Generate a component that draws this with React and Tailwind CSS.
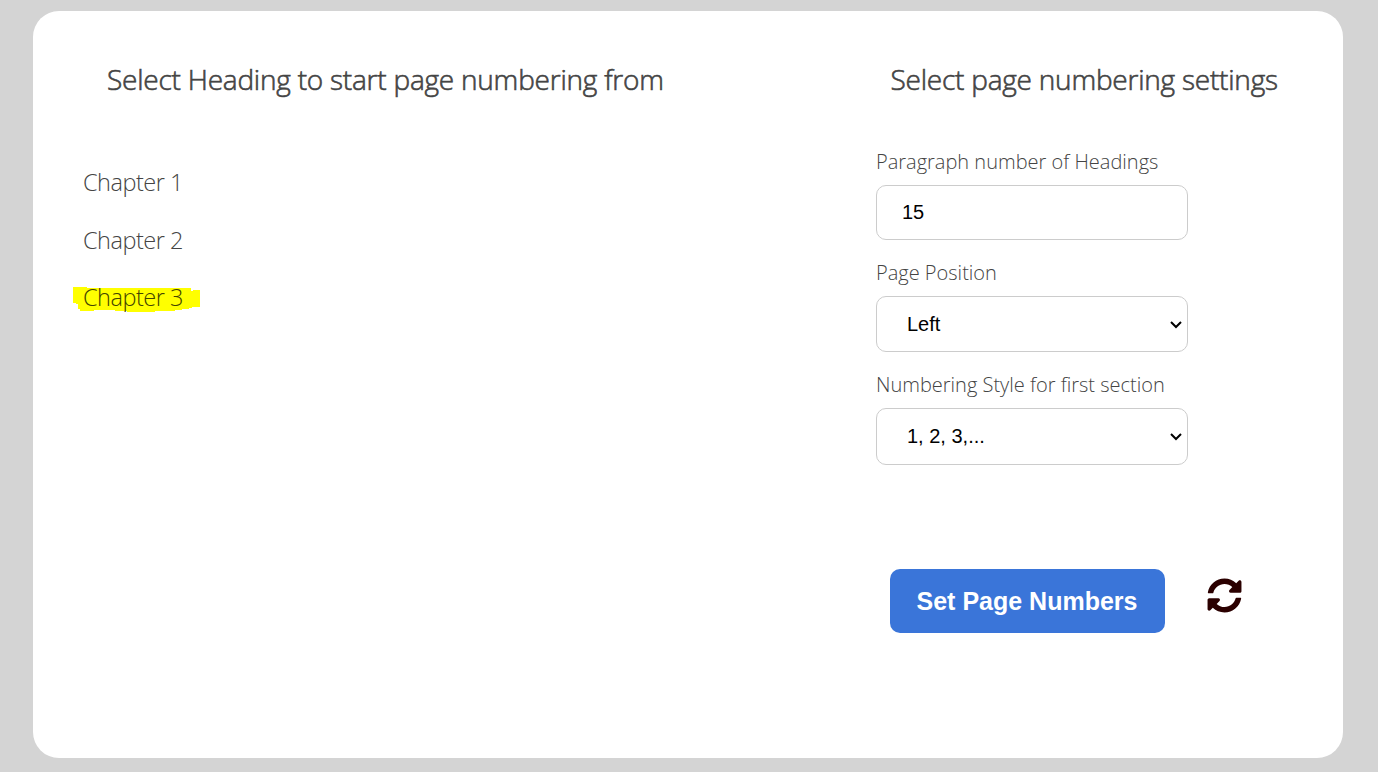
import { FaSyncAlt } from "react-icons/fa";

const chapters = ["Chapter 1", "Chapter 2", "Chapter 3"];

function Heading({ className, children }) {
  return (
    <h2 className={`text-[28px] leading-[40px] font-light tracking-[-0.225px] whitespace-nowrap text-[#444] [-webkit-text-stroke:0.6px_#444] ${className}`}>
      {children}
    </h2>
  );
}

function Field({ label, className, children }) {
  return (
    <label className={`block ${className}`}>
      <span className="block h-[37px] text-[20px] leading-[27px] font-light whitespace-nowrap text-[#444]">{label}</span>
      {children}
    </label>
  );
}

function Select({ value, className }) {
  return (
    <div className={`relative w-[312px] ${className}`}>
      <select defaultValue={value} className="h-full w-full appearance-none rounded-[10px] border border-[#ccc] bg-white pb-px pl-[30px] font-['Liberation_Sans',Arial,sans-serif] text-[20px] font-normal text-black">
        <option>{value}</option>
      </select>
      <svg viewBox="0 0 12 8" className="pointer-events-none absolute top-[25px] right-[6px] h-2 w-3" fill="none" stroke="#000" strokeWidth="2">
        <path d="M1 1L6 6L11 1" />
      </svg>
    </div>
  );
}

export default function App() {
  return (
    <div className="h-[772px] w-[1378px] bg-[#d4d4d4] pt-[11px] pl-[33px] font-['Open_Sans',sans-serif]">
      <main className="flex h-[747px] w-[1310px] rounded-[26px] bg-white">
        <section className="w-[843px] pt-[48px]">
          <Heading className="pl-[74px]">Select Heading to start page numbering from</Heading>
          <ul className="pt-[66px] pl-[50px] text-[23.5px] font-light tracking-[-0.5px] text-[#444]">
            {chapters.map((c) => (
              <li key={c} className="h-[57.5px] leading-[34px]">
                <span className={c === "Chapter 3" ? "relative isolate text-[#444400]" : ""}>
                  {c === "Chapter 3" && (
                    <svg viewBox="0 0 127 25" className="absolute top-[6px] -left-[10px] -z-10 h-[25px] w-[127px]" fill="#ff0" shapeRendering="crispEdges">
                      <path d="M0 0H14V1H118V4H120V3H127V20H119V21H116V22H109V23H102V24H82V25H54V24H42V23H21V24H7V22H5V17H3V16H0Z" />
                    </svg>
                  )}
                  {c}
                </span>
              </li>
            ))}
          </ul>
        </section>
        <section className="pt-[48px]">
          <Heading className="pl-[14.5px]">Select page numbering settings</Heading>
          <div className="pt-[49px]">
            <Field className="h-[111px]" label="Paragraph number of Headings">
              <input defaultValue="15" className="h-[55px] w-[312px] rounded-[10px] border border-[#ccc] pl-[25px] font-['Liberation_Sans',Arial,sans-serif] text-[20px] text-black" />
            </Field>
            <Field className="h-[112px]" label="Page Position">
              <Select className="h-[56px]" value="Left" />
            </Field>
            <Field className="h-[112px]" label="Numbering Style for first section">
              <Select className="h-[57px]" value="1, 2, 3,..." />
            </Field>
          </div>
          <div className="flex pt-[86px] pl-[14px]">
            <button className="h-16 w-[275px] rounded-[10px] bg-[#3a75d9] pt-[2px] pr-px font-['Liberation_Sans',Arial,sans-serif] text-[25px] font-bold text-white">Set Page Numbers</button>
            <FaSyncAlt className="mt-[9px] ml-[42px] h-[35px] w-[35px] text-[#2b0000]" />
          </div>
        </section>
      </main>
    </div>
  );
}
